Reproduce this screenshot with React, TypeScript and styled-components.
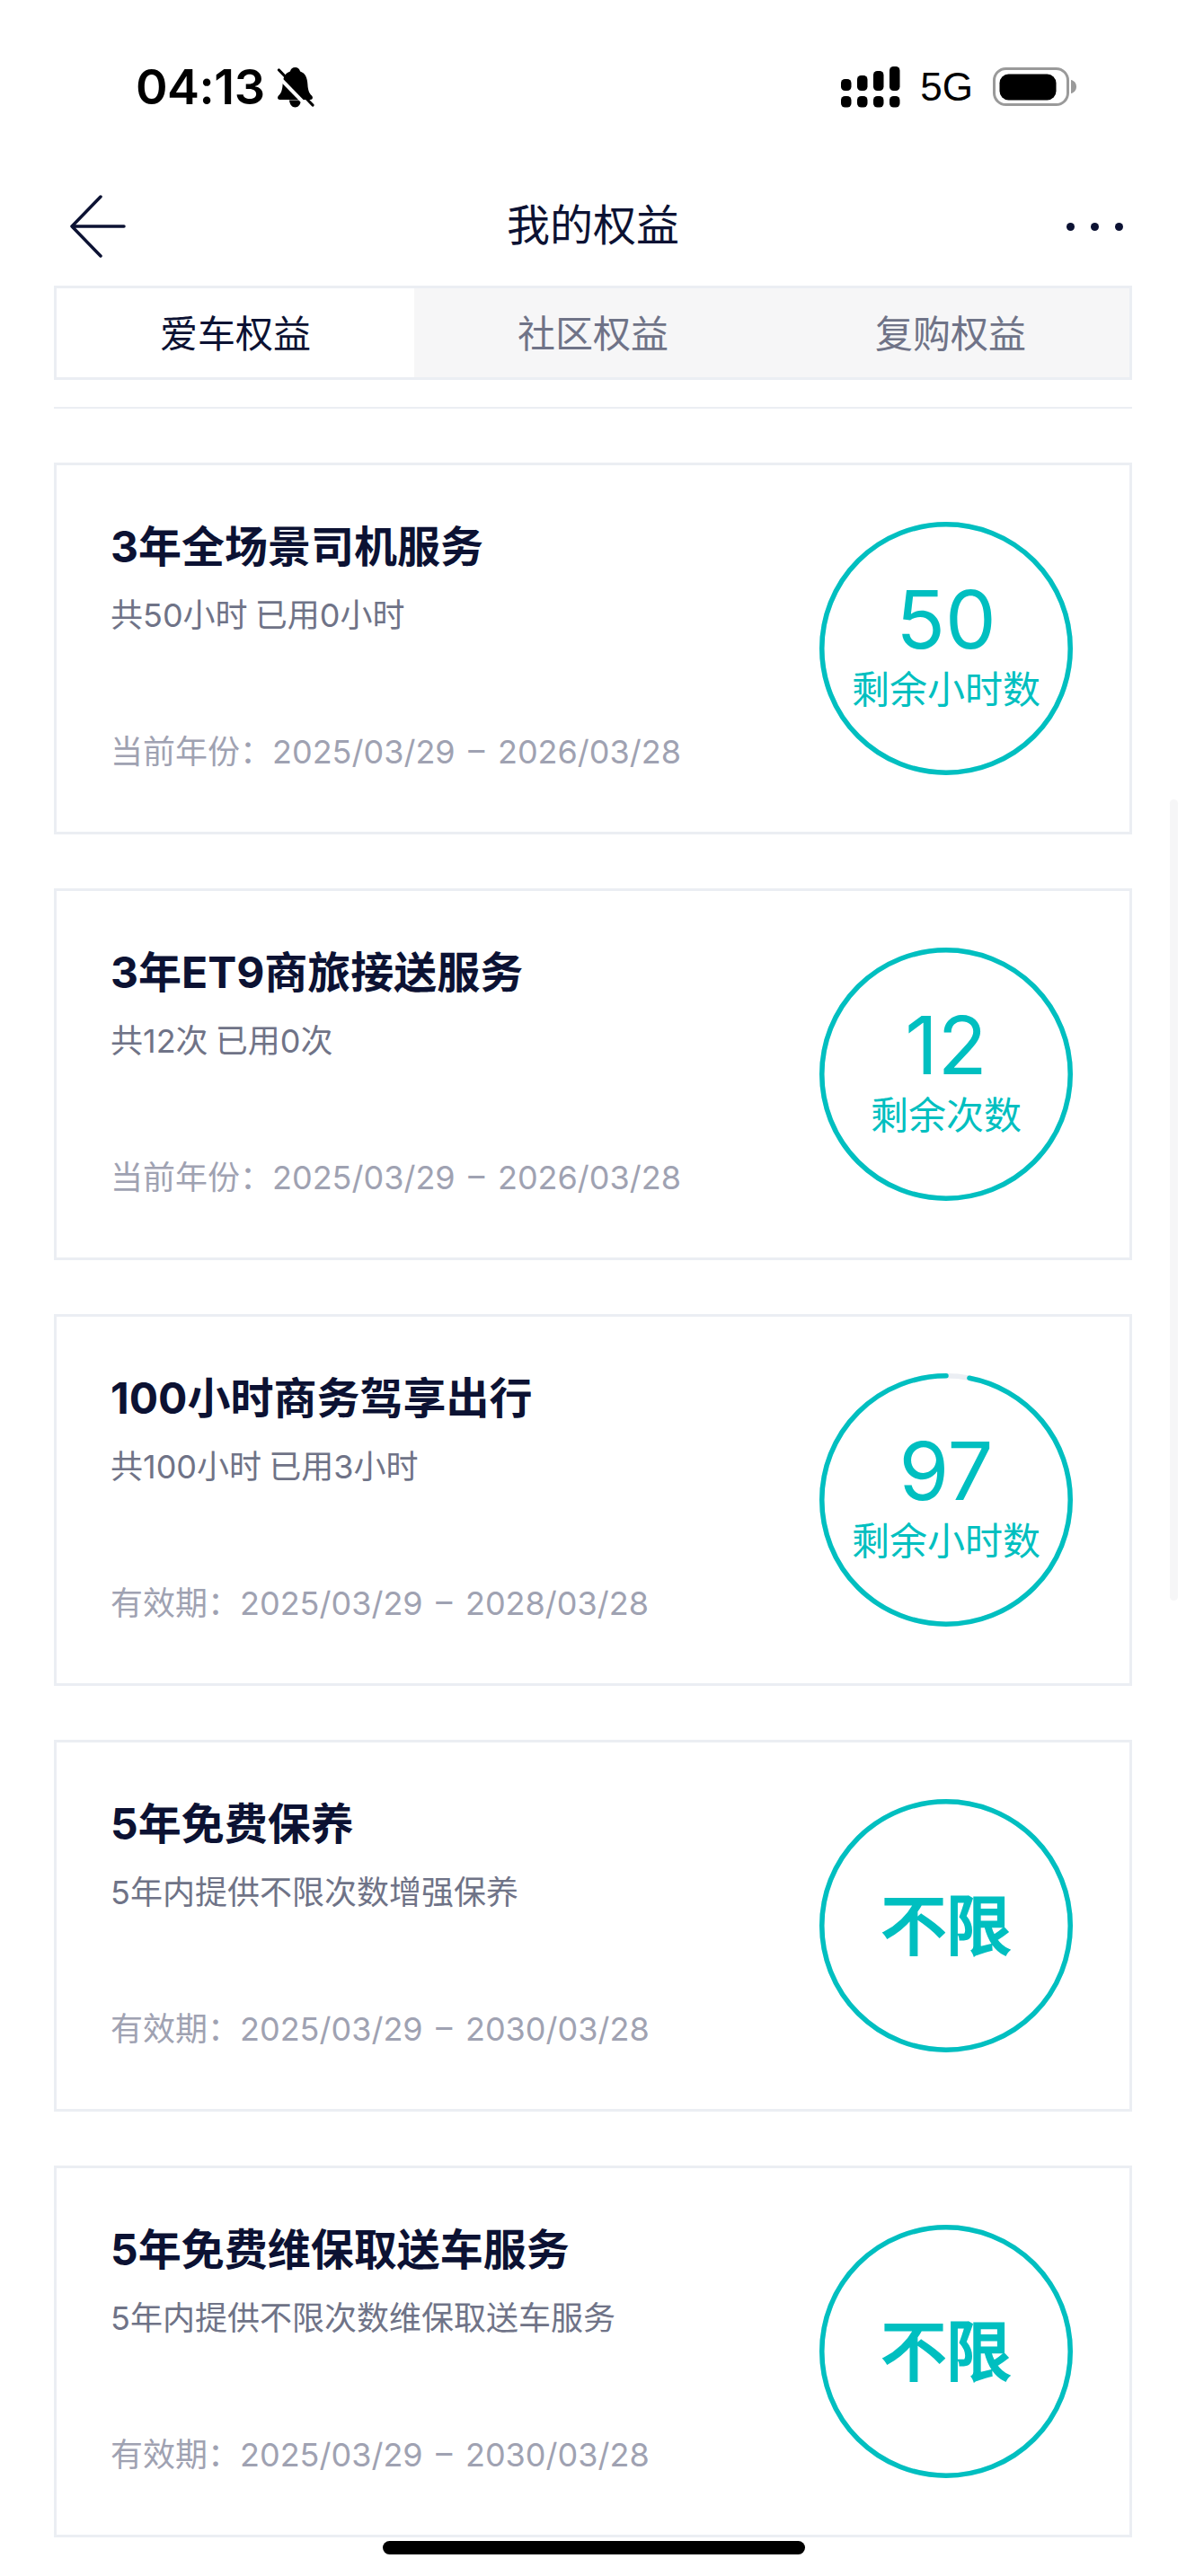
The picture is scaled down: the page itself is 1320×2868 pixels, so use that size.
import styled, { createGlobalStyle } from "styled-components";

const GlobalStyle = createGlobalStyle`
	html,
	body {
		margin: 0;
		padding: 0;
		background: #ffffff;
	}
	* {
		box-sizing: border-box;
	}
`;

const Page = styled.div`
	position: relative;
	width: 1320px;
	height: 2868px;
	overflow: hidden;
	background: #ffffff;
	color: #0c1233;
	font-family: "Inter", "Noto Sans CJK SC", sans-serif;
`;

const StatusBar = styled.div`
	height: 194px;
	padding: 0 121px 0 151px;
	display: flex;
	align-items: center;
	justify-content: space-between;
	color: #000000;
`;

const StatusGroup = styled.div`
	display: flex;
	align-items: center;
`;

const Clock = styled.span`
	font-size: 54px;
	font-weight: 600;
	line-height: 60px;
	letter-spacing: -0.5px;
	margin-right: 12px;
`;

const Network = styled.span`
	font-family: "Liberation Sans", sans-serif;
	font-size: 44px;
	line-height: 46px;
	margin: 0 22px;
`;

const NavBar = styled.div`
	height: 116px;
	padding: 0 70px;
	display: grid;
	grid-template-columns: 1fr auto 1fr;
	align-items: center;
`;

const BackButton = styled.div`
	display: flex;
	margin-left: 7px;
`;

const NavTitle = styled.h1`
	margin: 0 0 3px;
	font-size: 48px;
	font-weight: 400;
	line-height: 64px;
`;

const NavMore = styled.div`
	justify-self: end;
	display: flex;
	gap: 18px;
`;

const MoreDot = styled.i`
	width: 9px;
	height: 9px;
	border-radius: 50%;
	background: #0c1233;
`;

const Tabs = styled.div`
	margin: 8px 60px 0;
	height: 105px;
	border: 3px solid #ebeef3;
	background: #f6f6f7;
	display: grid;
	grid-template-columns: repeat(3, 1fr);
`;

const Tab = styled.div<{ $active?: boolean }>`
	padding-bottom: 5px;
	display: flex;
	align-items: center;
	justify-content: center;
	font-size: 42px;
	background: ${(p) => (p.$active ? "#ffffff" : "transparent")};
	color: ${(p) => (p.$active ? "#0c1233" : "#6f7387")};
`;

const Divider = styled.div`
	margin: 30px 60px 0;
	height: 2px;
	background: #ebeef3;
`;

const CardList = styled.div`
	margin: 60px 60px 0;
	display: flex;
	flex-direction: column;
	gap: 60px;
`;

const Card = styled.section`
	height: 414px;
	padding: 0 63px 0 60px;
	border: 3px solid #ebeef3;
	display: flex;
	align-items: center;
	justify-content: space-between;
`;

const CardInfo = styled.div`
	align-self: stretch;
	padding: 59px 0 64px;
	display: flex;
	flex-direction: column;
`;

const CardTitle = styled.h3`
	margin: 0;
	font-size: 48px;
	font-weight: 700;
	line-height: 64px;
	color: #0c1233;
`;

const CardUsage = styled.p`
	margin: 19px 0 0;
	font-size: 36px;
	line-height: 50px;
	word-spacing: -2px;
	color: #6f7387;
`;

const CardPeriod = styled.p`
	margin: auto 0 0;
	font-size: 36px;
	line-height: 50px;
	word-spacing: 4.5px;
	color: #9fa2b2;
`;

const Ring = styled.div`
	position: relative;
	width: 282px;
	height: 282px;
	flex-shrink: 0;
	display: flex;
	flex-direction: column;
	align-items: center;
	justify-content: center;
	color: #00bfc0;
`;

const RingSvg = styled.svg`
	position: absolute;
	inset: 0;
`;

const RingValue = styled.span`
	font-size: 90px;
	font-weight: 400;
	line-height: 90px;
`;

const RingLabel = styled.span`
	margin-top: 6px;
	margin-bottom: 4px;
	font-size: 42px;
	line-height: 54px;
`;

const RingUnlimited = styled.span`
	font-size: 72px;
	font-weight: 400;
	line-height: 90px;
	-webkit-text-stroke: 3px #00bfc0;
`;

const ScrollThumb = styled.div`
	position: absolute;
	left: 1302px;
	top: 890px;
	width: 9px;
	height: 892px;
	border-radius: 5px;
	background: #f6f6f7;
`;

const HomeIndicator = styled.div`
	position: absolute;
	left: 426px;
	top: 2829px;
	width: 470px;
	height: 15px;
	border-radius: 8px;
	background: #000000;
`;

function MutedBell() {
	return (
		<svg width="43" height="46" viewBox="0 0 43 46">
			<path
				d="M21.5 1c3 0 5 2 5.6 4.6C33 7.6 35 13 35.4 20c.3 6 1.6 9.6 4.6 12.6 1.6 1.7 1.2 4.4-1.4 4.4H4.4c-2.6 0-3-2.7-1.4-4.4C6 29.600 7.300 26 7.600 20 8 13 10 7.600 15.900 5.600 16.500 3 18.500 1 21.500 1Z"
				fill="#000"
			/>
			<path d="M15 37.500h13c-.4 4.800-3 8-6.500 8s-6.100-3.200-6.500-8Z" fill="#000" />
			<line x1="-1" y1="7.500" x2="38" y2="47.500" stroke="#fff" strokeWidth="4" />
			<line x1="3.500" y1="4" x2="41" y2="43" stroke="#000" strokeWidth="3.200" strokeLinecap="round" />
		</svg>
	);
}

function SignalDots() {
	const tops = [14, 10, 5, 0];
	return (
		<svg width="66" height="46" viewBox="0 0 66 46">
			{tops.map((top, i) => (
				<g key={i} fill="#000">
					<rect x={i * 18} y={top} width="11.500" height={27 - top} rx="4.500" />
					<rect x={i * 18} y="33" width="11.500" height="12.500" rx="4.500" />
				</g>
			))}
		</svg>
	);
}

function Battery() {
	return (
		<svg width="94" height="44" viewBox="0 0 94 44">
			<rect x="1.500" y="1.500" width="82" height="40" rx="13" fill="none" stroke="#9a9a9a" strokeWidth="3" />
			<rect x="7.500" y="7.500" width="63" height="29" rx="10" fill="#000" />
			<path d="M87 14c3.500.6 6 3.800 6 7.500s-2.500 6.900-6 7.500Z" fill="#9a9a9a" />
		</svg>
	);
}

function BackArrow() {
	return (
		<svg width="64" height="70" viewBox="0 0 64 70">
			<path
				d="M35 2 3 35l32 33M3 35h58"
				fill="none"
				stroke="#0c1233"
				strokeWidth="3.500"
				strokeLinecap="round"
				strokeLinejoin="round"
			/>
		</svg>
	);
}

interface GaugeProps {
	remaining?: number;
	total?: number;
	label?: string;
}

function Gauge({ remaining, total, label }: GaugeProps) {
	const radius = 138.25;
	const circumference = 2 * Math.PI * radius;
	const ratio = remaining !== undefined && total ? remaining / total : 1;
	const partial = ratio < 1;
	return (
		<Ring>
			<RingSvg width="282" height="282" viewBox="0 0 282 282">
				<circle cx="141" cy="141" r={radius} fill="none" stroke="#ebeef3" strokeWidth="5.500" />
				<circle
					cx="141"
					cy="141"
					r={radius}
					fill="none"
					stroke="#00bfc0"
					strokeWidth="5.500"
					strokeLinecap={partial ? "round" : "butt"}
					strokeDasharray={partial ? `${circumference * ratio} ${circumference}` : undefined}
					strokeDashoffset={partial ? -circumference * (1 - ratio) : undefined}
					transform="rotate(-90 141 141)"
				/>
			</RingSvg>
			{remaining === undefined ? (
				<RingUnlimited>不限</RingUnlimited>
			) : (
				<>
					<RingValue>{remaining}</RingValue>
					<RingLabel>{label}</RingLabel>
				</>
			)}
		</Ring>
	);
}

const benefits = [
	{
		title: "3年全场景司机服务",
		usage: "共50小时 已用0小时",
		period: "当前年份：2025/03/29 – 2026/03/28",
		remaining: 50,
		total: 50,
		label: "剩余小时数",
	},
	{
		title: "3年ET9商旅接送服务",
		usage: "共12次 已用0次",
		period: "当前年份：2025/03/29 – 2026/03/28",
		remaining: 12,
		total: 12,
		label: "剩余次数",
	},
	{
		title: "100小时商务驾享出行",
		usage: "共100小时 已用3小时",
		period: "有效期：2025/03/29 – 2028/03/28",
		remaining: 97,
		total: 100,
		label: "剩余小时数",
	},
	{
		title: "5年免费保养",
		usage: "5年内提供不限次数增强保养",
		period: "有效期：2025/03/29 – 2030/03/28",
	},
	{
		title: "5年免费维保取送车服务",
		usage: "5年内提供不限次数维保取送车服务",
		period: "有效期：2025/03/29 – 2030/03/28",
	},
];

export default function App() {
	return (
		<Page>
			<GlobalStyle />
			<StatusBar>
				<StatusGroup>
					<Clock>04:13</Clock>
					<MutedBell />
				</StatusGroup>
				<StatusGroup>
					<SignalDots />
					<Network>5G</Network>
					<Battery />
				</StatusGroup>
			</StatusBar>
			<NavBar>
				<BackButton>
					<BackArrow />
				</BackButton>
				<NavTitle>我的权益</NavTitle>
				<NavMore>
					<MoreDot />
					<MoreDot />
					<MoreDot />
				</NavMore>
			</NavBar>
			<Tabs>
				<Tab $active>爱车权益</Tab>
				<Tab>社区权益</Tab>
				<Tab>复购权益</Tab>
			</Tabs>
			<Divider />
			<CardList>
				{benefits.map((item) => (
					<Card key={item.title}>
						<CardInfo>
							<CardTitle>{item.title}</CardTitle>
							<CardUsage>{item.usage}</CardUsage>
							<CardPeriod>{item.period}</CardPeriod>
						</CardInfo>
						<Gauge remaining={item.remaining} total={item.total} label={item.label} />
					</Card>
				))}
			</CardList>
			<ScrollThumb />
			<HomeIndicator />
		</Page>
	);
}
